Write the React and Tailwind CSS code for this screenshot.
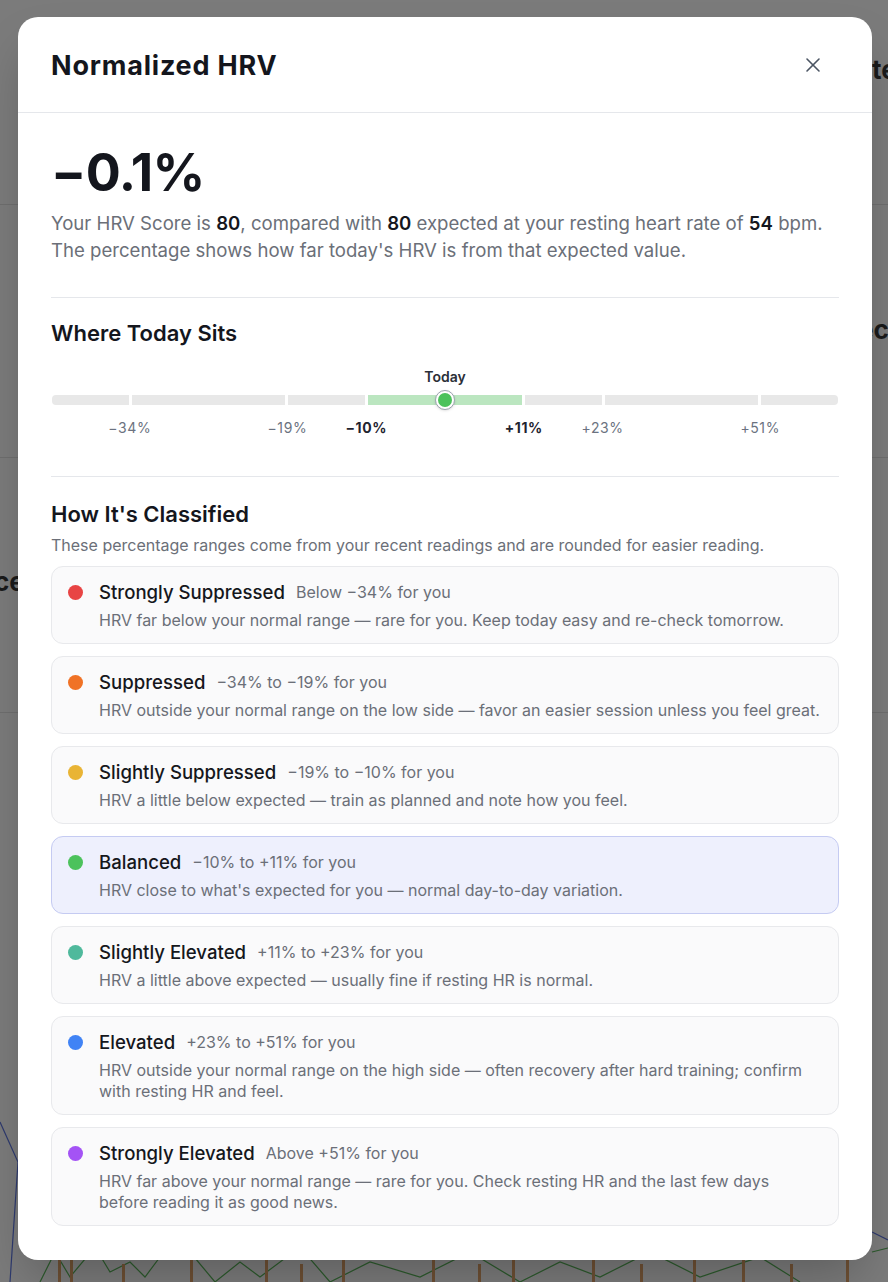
import { X } from 'lucide-react';

const levels = [
  {
    name: 'Strongly Suppressed',
    range: 'Below −34% for you',
    text: 'HRV far below your normal range — rare for you. Keep today easy and re-check tomorrow.',
    dot: 'bg-[#e84444]',
  },
  {
    name: 'Suppressed',
    range: '−34% to −19% for you',
    text: 'HRV outside your normal range on the low side — favor an easier session unless you feel great.',
    dot: 'bg-[#f07226]',
  },
  {
    name: 'Slightly Suppressed',
    range: '−19% to −10% for you',
    text: 'HRV a little below expected — train as planned and note how you feel.',
    dot: 'bg-[#e9b435]',
  },
  {
    name: 'Balanced',
    range: '−10% to +11% for you',
    text: "HRV close to what's expected for you — normal day-to-day variation.",
    dot: 'bg-[#4cc25c]',
    active: true,
  },
  {
    name: 'Slightly Elevated',
    range: '+11% to +23% for you',
    text: 'HRV a little above expected — usually fine if resting HR is normal.',
    dot: 'bg-[#4fb99c]',
  },
  {
    name: 'Elevated',
    range: '+23% to +51% for you',
    text: 'HRV outside your normal range on the high side — often recovery after hard training; confirm with resting HR and feel.',
    dot: 'bg-[#4083f5]',
  },
  {
    name: 'Strongly Elevated',
    range: 'Above +51% for you',
    text: 'HRV far above your normal range — rare for you. Check resting HR and the last few days before reading it as good news.',
    dot: 'bg-[#a453f5]',
  },
];

// segment widths (in tenths) along the bar
const segments = [
  { grow: 'flex-[1]', color: 'bg-[#e8e8e8]' },
  { grow: 'flex-[2]', color: 'bg-[#e8e8e8]' },
  { grow: 'flex-[1]', color: 'bg-[#e8e8e8]' },
  { grow: 'flex-[2]', color: 'bg-[#bbe6c0]' },
  { grow: 'flex-[1]', color: 'bg-[#e8e8e8]' },
  { grow: 'flex-[2]', color: 'bg-[#e8e8e8]' },
  { grow: 'flex-[1]', color: 'bg-[#e8e8e8]' },
];

// each label spans two of 20 columns, centred on a segment boundary
const ticks = [
  { label: '−34%', col: 'col-start-2' },
  { label: '−19%', col: 'col-start-6' },
  { label: '−10%', col: 'col-start-8', bold: true },
  { label: '+11%', col: 'col-start-12', bold: true },
  { label: '+23%', col: 'col-start-14' },
  { label: '+51%', col: 'col-start-18' },
];

const bgBars = [58, 70, 122, 190, 265, 300, 342, 432, 478, 512, 592, 640, 693, 742, 790, 846];

function ScaleBar() {
  return (
    <div className="mt-[19px] flex flex-col">
      <div className="text-center text-[14px] font-semibold leading-[20px] text-[#2b2f38]">Today</div>
      <div className="relative mt-[8px] px-[1px]">
        <div className="flex h-[10px] gap-[3px] overflow-hidden rounded-[4px]">
          {segments.map((s, i) => (
            <div key={i} className={`${s.grow} ${s.color}`} />
          ))}
        </div>
        {/* today marker sits on top of the bar */}
        <div className="absolute left-1/2 top-1/2 h-[20px] w-[20px] -translate-x-1/2 -translate-y-1/2 rounded-full border border-[#9ca3af] bg-white p-[2px] shadow-sm">
          <div className="h-full w-full rounded-full bg-[#4cc25c]" />
        </div>
      </div>
      <div className="mt-[13px] grid grid-cols-[repeat(20,minmax(0,1fr))]">
        {ticks.map((t) => (
          <div
            key={t.label}
            className={`${t.col} col-span-2 row-start-1 whitespace-nowrap text-center text-[14px] leading-[20px] tracking-[0.6px] ${
              t.bold ? 'font-bold text-[#1f2430]' : 'text-[#6b7280]'
            }`}
          >
            {t.label}
          </div>
        ))}
      </div>
    </div>
  );
}

function LevelCard({ level }) {
  return (
    <div
      className={`rounded-[12px] border py-[12px] pl-[16px] pr-[17px] ${
        level.active ? 'border-[#c5cbf2] bg-[#eef0fd]' : 'border-[#e8e9ec] bg-[#fafafb]'
      }`}
    >
      <div className="flex items-center">
        <span className={`mr-[16px] h-[15px] w-[15px] shrink-0 rounded-full ${level.dot}`} />
        <span className="text-[18.6px] font-medium leading-[26px] text-[#15171c]">{level.name}</span>
        <span className="ml-[11px] text-[16px] text-[#6b6f78]">{level.range}</span>
      </div>
      <p className="ml-[31px] mt-[5px] text-[16px] leading-[21px] text-[#6b6f78]">{level.text}</p>
    </div>
  );
}

export default function App() {
  return (
    <div className="relative min-h-screen overflow-hidden bg-[#7b7b7b] font-['Inter',sans-serif]">
      {/* dimmed page behind the dialog */}
      <div className="absolute left-[872px] top-[50px] text-[26px] font-bold text-[#1a1a1a]">te</div>
      <div className="absolute left-[858px] top-[310px] text-[26px] font-bold text-[#1a1a1a]">ec</div>
      <div className="absolute left-[-6px] top-[562px] text-[26px] font-bold text-[#1a1a1a]">ce</div>
      <div className="absolute left-0 right-0 top-[204px] h-px bg-[#6e6e6e]" />
      <div className="absolute left-0 right-0 top-[457px] h-px bg-[#6e6e6e]" />
      <div className="absolute left-0 right-0 top-[712px] h-px bg-[#6e6e6e]" />
      <svg className="absolute bottom-0 left-0" width="888" height="170" viewBox="0 0 888 170">
        <polyline points="0,10 18,50 10,170" fill="none" stroke="#2e3a6e" strokeWidth="1.2" />
        <polyline points="872,120 888,128" fill="none" stroke="#2e3a6e" strokeWidth="1.2" />
        <polyline points="872,140 888,136" fill="none" stroke="#2c5a2c" strokeWidth="1.2" />
        <polyline
          points="40,170 55,140 70,165 95,135 110,160 130,150 145,165 160,145 190,140 215,170 240,150 260,165 300,135 330,170 370,150 420,165 470,140 520,170 560,150 600,165 650,140 700,165 760,145 800,170"
          fill="none"
          stroke="#2c5a2c"
          strokeWidth="1.2"
        />
        {bgBars.map((x, i) => (
          <rect key={x} x={x} y={140 + (i % 3) * 6} width="3" height="40" fill="#6e5034" />
        ))}
      </svg>

      <div className="relative ml-[18px] mr-[16px] mt-[17px] flex h-[1243px] flex-col rounded-[20px] bg-white shadow-2xl">
        <header className="flex h-[96px] shrink-0 items-center justify-between border-b border-[#e5e7eb] pl-[33px] pr-[47px]">
          <h1 className="pt-[3px] text-[27px] font-bold tracking-[0.8px] text-[#14161d]">Normalized HRV</h1>
          <X className="h-[24px] w-[24px] text-[#4b5563]" strokeWidth={1.6} />
        </header>

        <div className="px-[33px] pt-[32px]">
          <div className="text-[52px] font-bold leading-[56px] tracking-[-0.6px] text-[#14161d]">−0.1%</div>
          <p className="mt-[9px] text-[18.6px] leading-[27px] text-[#6b6f78]">
            Your HRV Score is <span className="font-semibold text-[#14161d]">80</span>, compared with{' '}
            <span className="font-semibold text-[#14161d]">80</span> expected at your resting heart rate of{' '}
            <span className="font-semibold text-[#14161d]">54</span> bpm. The percentage shows how far today's HRV is
            from that expected value.
          </p>

          <div className="mt-[33px] border-t border-[#e5e7eb] pt-[20px]">
            <h2 className="text-[22px] font-semibold leading-[30px] text-[#14161d]">Where Today Sits</h2>
            <ScaleBar />
          </div>

          <div className="mt-[38px] border-t border-[#e5e7eb] pt-[22px]">
            <h2 className="text-[22px] font-semibold leading-[30px] text-[#14161d]">How It's Classified</h2>
            <p className="mt-[5px] text-[16px] leading-[22px] text-[#6b6f78]">
              These percentage ranges come from your recent readings and are rounded for easier reading.
            </p>
            <div className="mt-[10px] flex flex-col gap-[12px]">
              {levels.map((l) => (
                <LevelCard key={l.name} level={l} />
              ))}
            </div>
          </div>
        </div>
      </div>
    </div>
  );
}
